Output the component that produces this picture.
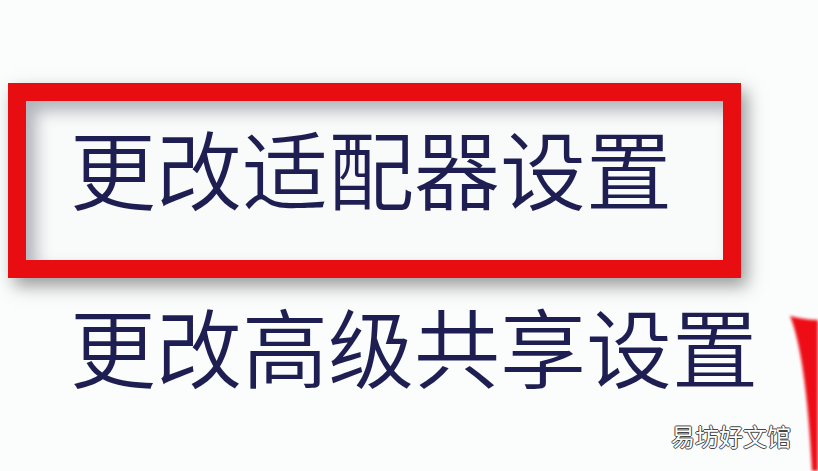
import React from 'react'

const cjk = '"Noto Sans CJK SC", "Noto Sans", sans-serif'

export default function App() {
  return (
    <div
      className="relative w-[818px] h-[471px] overflow-hidden bg-[#fbfcfc]"
      style={{ fontFamily: cjk }}
    >
      <div className="pt-[83px] pl-[8px]">
        {/* highlighted link */}
        <div className="w-[733px] h-[195px] border-[18px] border-[#e80d10] shadow-[6px_8px_16px_rgba(60,60,60,0.5)]">
          <div className="h-full pt-[23px] pl-[44px] bg-[#f9fafa] shadow-[inset_10px_10px_16px_rgba(90,95,110,0.45)]">
            <span className="block text-[86px] leading-[86px] text-[#1f1e52] font-[350]">
              更改适配器设置
            </span>
          </div>
        </div>

        <div className="mt-[24px] pl-[62px]">
          <span className="block text-[86px] leading-[86px] text-[#1f1e52] font-[350]">
            更改高级共享设置
          </span>
        </div>
      </div>

      {/* red arrow stroke on the right edge */}
      <svg
        className="absolute right-0 top-[300px]"
        width="40"
        height="171"
        viewBox="0 0 40 171"
      >
        <defs>
          <filter id="blur">
            <feGaussianBlur stdDeviation="1.5" />
          </filter>
        </defs>
        <path
          d="M12 16 C 22 40, 30 90, 34 171 L 40 171 L 40 20 C 30 20, 20 18, 12 16 Z"
          fill="#ee1014"
          filter="url(#blur)"
        />
      </svg>

      {/* watermark */}
      <div
        className="absolute left-[671px] top-[421px] text-[24px] leading-[30px] text-white"
        style={{
          textShadow:
            '1px 0 0 #444, -1px 0 0 #444, 0 1px 0 #444, 0 -1px 0 #444',
        }}
      >
        易坊好文馆
      </div>
    </div>
  )
}
